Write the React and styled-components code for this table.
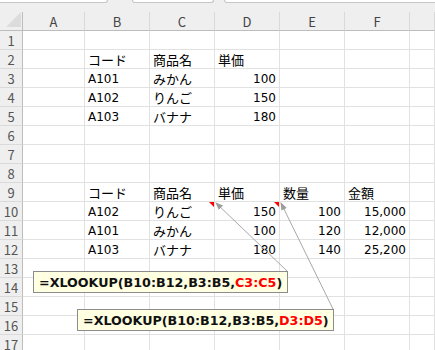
import React from 'react'
import styled, { createGlobalStyle } from 'styled-components'

const GlobalStyle = createGlobalStyle`
  html, body {
    margin: 0;
    padding: 0;
    background: #fff;
  }
  body {
    overflow: hidden;
  }
`

const Window = styled.div`
  position: relative;
  width: 435px;
  height: 350px;
  overflow: hidden;
  background: #fff;
  font-family: "Noto Sans CJK JP", "Noto Sans", sans-serif;
`

// bottom edges of the name box / formula bar peeking in at the top
const TopStrip = styled.div`
  display: flex;
  align-items: flex-start;
  height: 12px;
  background: #efefef;
`

const FieldBox = styled.div`
  flex: ${p => (p.$w ? 'none' : 1)};
  width: ${p => (p.$w ? `${p.$w}px` : 'auto')};
  height: 2px;
  margin-left: ${p => p.$gap || 0}px;
  margin-right: ${p => (p.$last ? -6 : 0)}px;
  background: #fff;
  border: 1px solid #c6c6c6;
  border-top: none;
  border-radius: 0 0 4px 4px;
`

const Grid = styled.div`
  display: grid;
  grid-template-columns: 23px 62px repeat(5, 65px) 1fr;
  grid-auto-rows: 19px;
`

const Corner = styled.div`
  position: relative;
  background: #efefef;
  border-right: 1px solid #bdbdbd;
  border-bottom: 1px solid #bdbdbd;

  svg {
    position: absolute;
    left: 0;
    top: 0;
  }
`

const ColHead = styled.div`
  display: flex;
  align-items: center;
  justify-content: center;
  background: #efefef;
  border-right: 1px solid #d9d9d9;
  border-bottom: 1px solid #bdbdbd;
  color: #444;
  font-size: 13px;
  line-height: 1;
`

const RowHead = styled.div`
  display: flex;
  align-items: center;
  justify-content: center;
  background: #efefef;
  border-right: 1px solid #bdbdbd;
  border-bottom: 1px solid #dadada;
  color: #555;
  font-size: 13px;
  line-height: 1;
  padding-top: 1px;
`

const Cell = styled.div`
  position: relative;
  display: flex;
  align-items: center;
  justify-content: ${p => (p.$num ? 'flex-end' : 'flex-start')};
  padding: ${p => (p.$jp ? '1px' : '2px')} 3px 0;
  border-right: 1px solid #e1e1e1;
  border-bottom: 1px solid #e1e1e1;
  color: #000;
  font-family: ${p => (p.$jp ? '"Noto Sans CJK JP", sans-serif' : '"DejaVu Sans", sans-serif')};
  font-size: ${p => (p.$jp ? 13 : 12)}px;
  line-height: 1;
  white-space: nowrap;
`

const NoteMark = styled.span`
  position: absolute;
  top: 0;
  right: 0;
  width: 0;
  height: 0;
  border-top: 5px solid #f00;
  border-left: 5px solid transparent;
`

const Note = styled.div`
  position: absolute;
  left: ${p => p.$x}px;
  top: ${p => p.$y}px;
  width: ${p => p.$w}px;
  height: 22px;
  box-sizing: border-box;
  display: flex;
  align-items: center;
  padding: 0 5px;
  background: #ffffe1;
  border: 1px solid #8c8c8c;
  color: #111;
  font: bold 12.7px "DejaVu Sans", sans-serif;
  white-space: nowrap;
`

const Ref = styled.span`
  color: #f00;
`

const Leaders = styled.svg`
  position: absolute;
  left: 0;
  top: 0;
  pointer-events: none;
`

const columns = ['A', 'B', 'C', 'D', 'E', 'F', '']

const sheet = {
  2: { B: 'コード', C: '商品名', D: '単価' },
  3: { B: 'A101', C: 'みかん', D: 100 },
  4: { B: 'A102', C: 'りんご', D: 150 },
  5: { B: 'A103', C: 'バナナ', D: 180 },
  9: { B: 'コード', C: '商品名', D: '単価', E: '数量', F: '金額' },
  10: { B: 'A102', C: 'りんご', D: 150, E: 100, F: 15000 },
  11: { B: 'A101', C: 'みかん', D: 100, E: 120, F: 12000 },
  12: { B: 'A103', C: 'バナナ', D: 180, E: 140, F: 25200 },
}

const notes = { '10C': true, '10D': true }

const rows = Array.from({ length: 17 }, (_, i) => i + 1)

const isJapanese = v => typeof v === 'string' && /[^\x00-\x7f]/.test(v)

export default function App() {
  return (
    <Window>
      <GlobalStyle />
      <TopStrip>
        <FieldBox $w={110} $gap={-4} />
        <FieldBox $w={80} $gap={24} />
        <FieldBox $gap={10} $last />
      </TopStrip>

      <Grid>
        <Corner>
          <svg width="23" height="19">
            <polygon points="6,15 21,15 21,0" fill="#dcdcdc" />
          </svg>
        </Corner>
        {columns.map((c, i) => (
          <ColHead key={i}>{c}</ColHead>
        ))}

        {rows.map(r => (
          <React.Fragment key={r}>
            <RowHead>{r}</RowHead>
            {columns.map((c, i) => {
              const v = sheet[r] && sheet[r][c]
              const num = typeof v === 'number'
              return (
                <Cell key={i} $num={num} $jp={isJapanese(v)}>
                  {num ? v.toLocaleString('en-US') : v}
                  {notes[`${r}${c}`] && <NoteMark />}
                </Cell>
              )
            })}
          </React.Fragment>
        ))}
      </Grid>

      <Leaders width="435" height="350">
        <defs>
          <marker
            id="tip"
            markerUnits="userSpaceOnUse"
            markerWidth="8"
            markerHeight="6"
            refX="7"
            refY="3"
            orient="auto"
          >
            <path d="M0,0 L8,3 L0,6 z" fill="#9d9d9d" />
          </marker>
        </defs>
        <line x1="287" y1="271" x2="216" y2="203" stroke="#a8a8a8" strokeWidth="1" markerEnd="url(#tip)" />
        <line x1="333" y1="309" x2="281" y2="203" stroke="#a8a8a8" strokeWidth="1" markerEnd="url(#tip)" />
      </Leaders>

      <Note $x={33} $y={271} $w={255}>
        =XLOOKUP(B10:B12,B3:B5,<Ref>C3:C5</Ref>)
      </Note>
      <Note $x={77} $y={309} $w={257}>
        =XLOOKUP(B10:B12,B3:B5,<Ref>D3:D5</Ref>)
      </Note>
    </Window>
  )
}
